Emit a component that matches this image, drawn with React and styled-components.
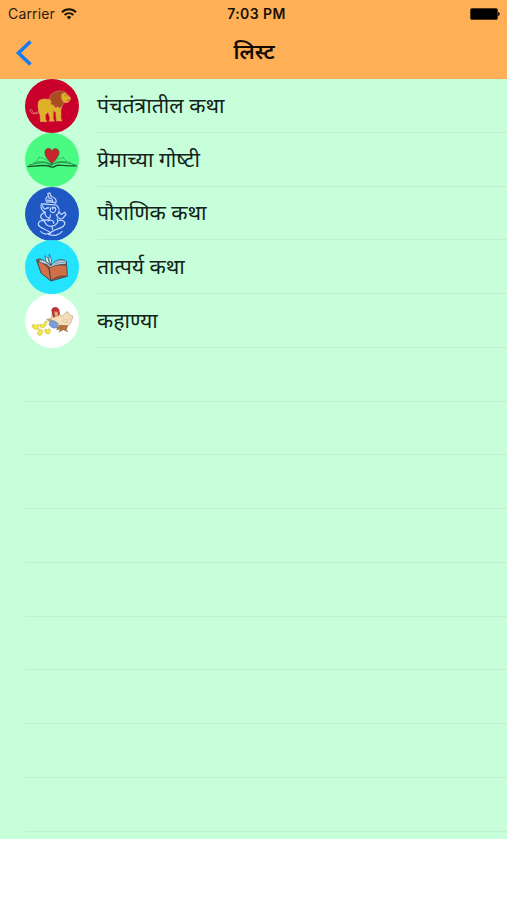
import React from 'react';
import styled, { createGlobalStyle } from 'styled-components';

const GlobalStyle = createGlobalStyle`
	* {
		box-sizing: border-box;
	}

	body {
		margin: 0;
		background-color: #ffffff;
		font-family: 'Inter', 'Noto Sans', sans-serif;
		overflow: hidden;
	}
`;

const Screen = styled.div`
	display: flex;
	flex-direction: column;
	width: 507px;
	height: 900px;
	background-color: #ffffff;
`;

const Header = styled.header`
	flex: none;
	height: 79px;
	background-color: #ffb057;
`;

const StatusBar = styled.div`
	display: grid;
	grid-template-columns: 1fr auto 1fr;
	align-items: center;
	height: 27px;
	padding: 0 7px 0 8px;
	color: #2b1c0b;
	font-size: 14px;

	.carrier {
		display: flex;
		align-items: center;
		gap: 6px;
		letter-spacing: 0.15px;
	}

	.time {
		margin-left: 5px;
		color: #1a1006;
		font-weight: 600;
		letter-spacing: 0.4px;
	}

	.battery {
		justify-self: end;
	}

	svg {
		display: block;
	}
`;

const NavBar = styled.div`
	display: grid;
	grid-template-columns: 1fr auto 1fr;
	align-items: center;
	height: 52px;
	padding: 0 14px;
`;

const BackButton = styled.button`
	justify-self: start;
	padding: 0;
	border: 0;
	background: none;

	svg {
		display: block;
	}
`;

const Title = styled.h1`
	margin: 0;
	padding: 0 0 4px 1px;
	color: #130c04;
	font-family: 'Noto Sans', sans-serif;
	font-size: 21.3px;
	font-weight: 600;
	line-height: 30px;
`;

const List = styled.ul`
	flex: none;
	height: 760px;
	margin: 0;
	padding: 0;
	overflow: hidden;
	list-style: none;
	background-color: #c7ffda;
`;

const Row = styled.li`
	display: flex;
	height: 53.75px;
	padding-left: 25px;
`;

const Thumb = styled.svg`
	display: block;
	flex: none;
	width: 54px;
	height: 54px;
	margin-right: 18px;
`;

const Label = styled.div`
	display: flex;
	flex: 1;
	align-items: center;
	padding-bottom: 1px;
	border-bottom: 1px solid #c2eed1;
	color: #14231a;
	font-family: 'Noto Sans', sans-serif;
	font-size: 21.2px;
	line-height: 30px;
	white-space: nowrap;
`;

const Lion = () => (
	<Thumb viewBox='30 9 162 162'>
		<circle cx='111' cy='90' r='81' fill='#c90029' />
		<g stroke='#e58a72' strokeWidth='1.5' strokeLinejoin='round'>
			<path d='M75 99C65 115 53 112 52 105C50 99 45 99 45 104C48 115 66 118 76 105' fill='none' stroke='#df7164' strokeWidth='3' />
			<path d='M71 75C79 66 95 69 108 70L145 76C143 88 139 94 138 103L138 127L141 135H124L122 109L115 104L115 128L118 136H102L105 127L99 109L91 117L92 130L96 137H76L75 117C69 104 67 84 71 75Z' fill='#dfb126' />
			<path d='M117 49C127 43 147 43 155 52L166 63C168 73 159 81 149 79L143 88L135 97L128 93L120 95L116 88L107 85L109 76L103 68L107 56Z' fill='#a84e20' />
			<path d='M140 54L149 50C155 55 159 61 166 65C167 73 161 79 154 80L144 77L139 66Z' fill='#dfb126' />
		</g>
		<path d='M149 59L153 60M155 73L164 72' stroke='#7b3718' strokeWidth='2' />
	</Thumb>
);

const HeartBook = () => (
	<Thumb viewBox='30 8.25 162 162'>
		<circle cx='111' cy='89' r='81' fill='#4bfa83' />
		<g fill='none' stroke='#16532c' strokeLinecap='round'>
			<path d='M39 109C60 108 91 101 108 110C119 114 118 104 132 105C151 106 167 107 184 107' strokeWidth='4' />
			<path d='M42 105C65 98 94 91 108 106C122 94 149 93 180 104' strokeWidth='2' />
			<path d='M56 98C76 92 96 92 108 104C124 90 145 92 166 97' strokeWidth='1.3' />
			<path d='M72 81C88 84 101 89 108 102C117 91 130 86 145 82M72 81L64 94M145 82L154 94' strokeWidth='1' />
		</g>
		<path d='M110 101C104 91 90 82 90 67C90 52 106 51 111 62C116 51 131 54 132 66C133 80 117 91 110 101Z' fill='#c9252c' stroke='#642e22' strokeWidth='2' />
	</Thumb>
);

const Ganesha = () => (
	<Thumb viewBox='30 7.5 162 162'>
		<circle cx='111' cy='88.5' r='81' fill='#1f57c3' />
		<g fill='none' stroke='#c4d8ff' strokeWidth='3.6' strokeLinecap='round' strokeLinejoin='round'>
			<path d='M95 53C89 44 94 36 101 36L98 28L104 25L109 36C119 38 127 46 122 56C115 51 106 51 95 53Z' />
			<path d='M101 40C109 39 115 46 112 54M97 47L108 48' />
			<path d='M92 58C104 65 121 55 127 65C137 75 132 87 124 92M92 59L79 58C76 69 81 82 91 83C88 90 93 99 101 99' />
			<path d='M83 64C84 73 91 75 97 71M96 69L102 70M112 68L118 70' />
			<path d='M108 70C99 82 118 91 122 77C124 66 112 67 113 74' />
			<path d='M89 84C75 89 72 101 86 106C99 110 108 101 106 91M132 83L139 90L149 83L153 90L143 102C136 106 127 99 124 91' />
			<path d='M88 107C89 119 99 127 111 125C125 123 133 111 126 103' />
			<path d='M86 109C71 106 65 119 75 127C86 134 97 137 107 145C98 151 83 149 77 141' />
			<path d='M132 108C148 105 154 116 145 125C133 135 116 132 101 150C116 155 133 153 141 141' />
			<path d='M99 110C107 103 118 110 116 117M111 127L113 135' />
		</g>
	</Thumb>
);

const OpenBook = () => (
	<Thumb viewBox='30 6.75 162 162'>
		<circle cx='111' cy='88' r='81' fill='#24e3ff' />
		<g stroke='#343f4c' strokeWidth='2' strokeLinejoin='round'>
			<path d='M64 66L75 63L108 81L154 72L156 116L108 130L78 105Z' fill='#a94d31' />
			<path d='M71 67C82 64 94 70 105 82L111 81C118 68 136 60 154 70L153 81C137 78 122 82 109 93L96 80L74 76Z' fill='#b8d4e6' />
			<path d='M90 54C98 58 105 68 107 83L99 76L93 72ZM103 50C110 62 111 72 108 83L101 70Z' fill='#d9eef5' />
			<path d='M66 71C76 72 93 79 102 95L108 129L79 107Z' fill='#d07048' />
			<path d='M103 91C120 80 139 81 155 83L157 116C137 112 122 117 108 129Z' fill='#d07048' />
			<path d='M116 77C128 68 140 67 151 70M118 80C132 73 142 73 152 76' fill='none' stroke='#627f96' />
		</g>
	</Thumb>
);

const HenAndChicks = () => (
	<Thumb viewBox='30 6 162 162'>
		<circle cx='111' cy='87' r='81' fill='#ffffff' />
		<g strokeLinejoin='round' strokeWidth='1.5'>
			<path d='M112 63L131 60L137 72C147 73 150 58 159 59L163 68L173 72C171 92 162 106 139 109L119 102L106 91L108 80Z' fill='#f4dfb8' stroke='#9c806c' />
			<path d='M112 65L110 54C112 44 129 43 132 54L134 66L130 71L127 60L121 58L118 62L120 75L115 76Z' fill='#c52d32' stroke='#903435' />
			<path d='M118 59L128 59L130 72L120 72Z' fill='#eaaf7f' stroke='#a66445' />
			<path d='M106 84L119 87L130 95L126 108H112L102 98Z' fill='#7c9ed3' stroke='#6577a9' />
			<path d='M133 100L158 101L154 113L158 119L145 113L132 120L137 111L125 113Z' fill='#bb713c' stroke='#7d5538' />
			<path d='M95 82L106 80L109 86L101 88Z' fill='#d3b06a' stroke='#8e8264' />
			<path d='M145 76C147 86 158 87 167 78M140 84C145 91 153 93 161 90' fill='none' stroke='#c5a47e' />
		</g>
		<g fill='#f5e83e' stroke='#aaa33b' strokeWidth='1.3' strokeLinejoin='round'>
			<path d='M51 99L58 97L61 102L70 96L73 100L68 111L59 112L53 107Z' />
			<path d='M76 96L85 99L90 88L96 88L94 99L85 108L76 105Z' />
			<path d='M68 111L78 112L83 116L81 125L76 131L69 128L66 122L72 118Z' />
			<path d='M90 111L97 113L103 110L107 116L102 126L94 125L89 119Z' />
		</g>
	</Thumb>
);

// the joiner in the second name keeps ष् as a half form
const stories = [
	{ name: 'पंचतंत्रातील कथा', Icon: Lion },
	{ name: 'प्रेमाच्या गोष्\u200dटी', Icon: HeartBook },
	{ name: 'पौराणिक कथा', Icon: Ganesha },
	{ name: 'तात्पर्य कथा', Icon: OpenBook },
	{ name: 'कहाण्या', Icon: HenAndChicks },
];

// separators of the unused cells start at the table inset
const EmptyRow = styled.li`
	height: 53.75px;
	margin-left: 25px;
	border-bottom: 1px solid #c2eed1;
`;

const App = () => {
	return (
		<Screen>
			<GlobalStyle />
			<Header>
				<StatusBar>
					<div className='carrier'>
						Carrier
						<svg width='16' height='12' viewBox='0 0 16 12' fill='none' stroke='#1c1207' strokeWidth='2'>
							<path d='M1 4.2C5 0.3 11 0.3 15 4.2M3.6 7C6.2 4.6 9.8 4.6 12.4 7' />
							<path d='M5.7 9C7 7.8 9 7.8 10.3 9L8 11.4Z' fill='#1c1207' stroke='none' />
						</svg>
					</div>
					<div className='time'>7:03 PM</div>
					<svg className='battery' width='30' height='12' viewBox='0 0 30 12'>
						<rect x='0.5' y='0.5' width='27' height='11' rx='1.5' fill='#000000' stroke='#533714' />
						<path d='M28 4C30.4 4.5 30.4 7.5 28 8Z' fill='#2b1c0b' />
					</svg>
				</StatusBar>
				<NavBar>
					<BackButton aria-label='Back'>
						<svg width='20' height='26' viewBox='0 0 20 26'>
							<path d='M16.5 1.5L4.5 13L16.5 24.5' fill='none' stroke='#147bf0' strokeWidth='3.6' />
						</svg>
					</BackButton>
					<Title>लिस्ट</Title>
				</NavBar>
			</Header>
			<List>
				{ stories.map(({ name, Icon }) => (
					<Row key={name}>
						<Icon />
						<Label>{ name }</Label>
					</Row>
				)) }
				{ Array.from({ length: 9 }, (_, i) => <EmptyRow key={i} />) }
			</List>
		</Screen>
	);
};

export default App;
